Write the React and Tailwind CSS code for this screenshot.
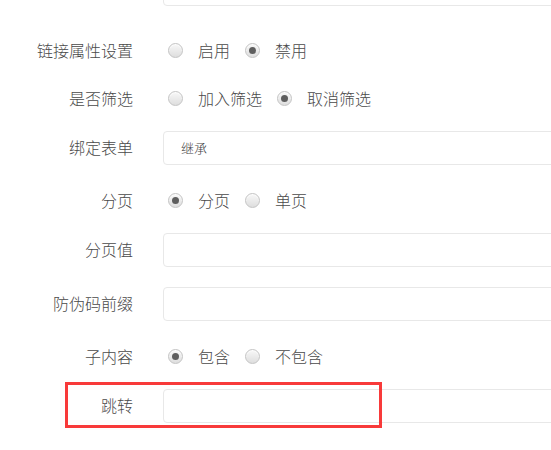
import React from "react";

function Radio({ checked }) {
  return (
    <span className="w-[15px] h-[15px] rounded-full border border-[#c4c4c4] bg-gradient-to-b from-[#f8f8f8] to-[#dedede] shadow-[inset_0_1px_1px_rgba(255,255,255,0.8)] flex items-center justify-center shrink-0">
      {checked && <span className="w-[7px] h-[7px] rounded-full bg-[#5e5e5e]" />}
    </span>
  );
}

function RadioRow({ label, options, checkedIndex, mt }) {
  return (
    <div className={`flex items-center h-[30px] ${mt}`}>
      <div className="w-[133px] text-right text-[16px] font-light text-[#4a4a4a] shrink-0">{label}</div>
      <div className="flex items-center ml-[35px] text-[16px] font-light text-[#4a4a4a]">
        {options.map((o, i) => (
          <div key={i} className="flex items-center mr-[15px]">
            <Radio checked={i === checkedIndex} />
            <span className="ml-[15px]">{o}</span>
          </div>
        ))}
      </div>
    </div>
  );
}

function InputRow({ label, value, mt }) {
  return (
    <div className={`flex items-center h-[34px] ${mt}`}>
      <div className="w-[133px] text-right text-[16px] font-light text-[#4a4a4a] shrink-0 -mt-[3px]">{label}</div>
      <div className="ml-[30px] w-[420px] h-[34px] border border-[#e8e8e8] rounded-[4px] bg-white flex items-center pl-[17px] text-[13px] font-light text-[#444] shrink-0">
        {value}
      </div>
    </div>
  );
}

export default function App() {
  return (
    <div className="relative w-[551px] h-[450px] overflow-hidden bg-white font-['Noto_Sans_CJK_SC','Noto_Sans',sans-serif]">
      <div className="flex -mt-[28px]">
        <div className="ml-[163px] w-[420px] h-[34px] border border-[#e8e8e8] rounded-[4px] shrink-0" />
      </div>
      <RadioRow label="链接属性设置" options={["启用", "禁用"]} checkedIndex={1} mt="mt-[29px]" />
      <RadioRow label="是否筛选" options={["加入筛选", "取消筛选"]} checkedIndex={1} mt="mt-[18px]" />
      <InputRow label="绑定表单" value="继承" mt="mt-[18px]" />
      <RadioRow label="分页" options={["分页", "单页"]} checkedIndex={0} mt="mt-[20px]" />
      <InputRow label="分页值" value="" mt="mt-[18px]" />
      <InputRow label="防伪码前缀" value="" mt="mt-[20px]" />
      <RadioRow label="子内容" options={["包含", "不包含"]} checkedIndex={0} mt="mt-[20px]" />
      <InputRow label="跳转" value="" mt="mt-[18px]" />
      <div className="absolute left-[65px] top-[382px] w-[317px] h-[46px] border-[3px] border-[#f83a3a]" />
    </div>
  );
}
